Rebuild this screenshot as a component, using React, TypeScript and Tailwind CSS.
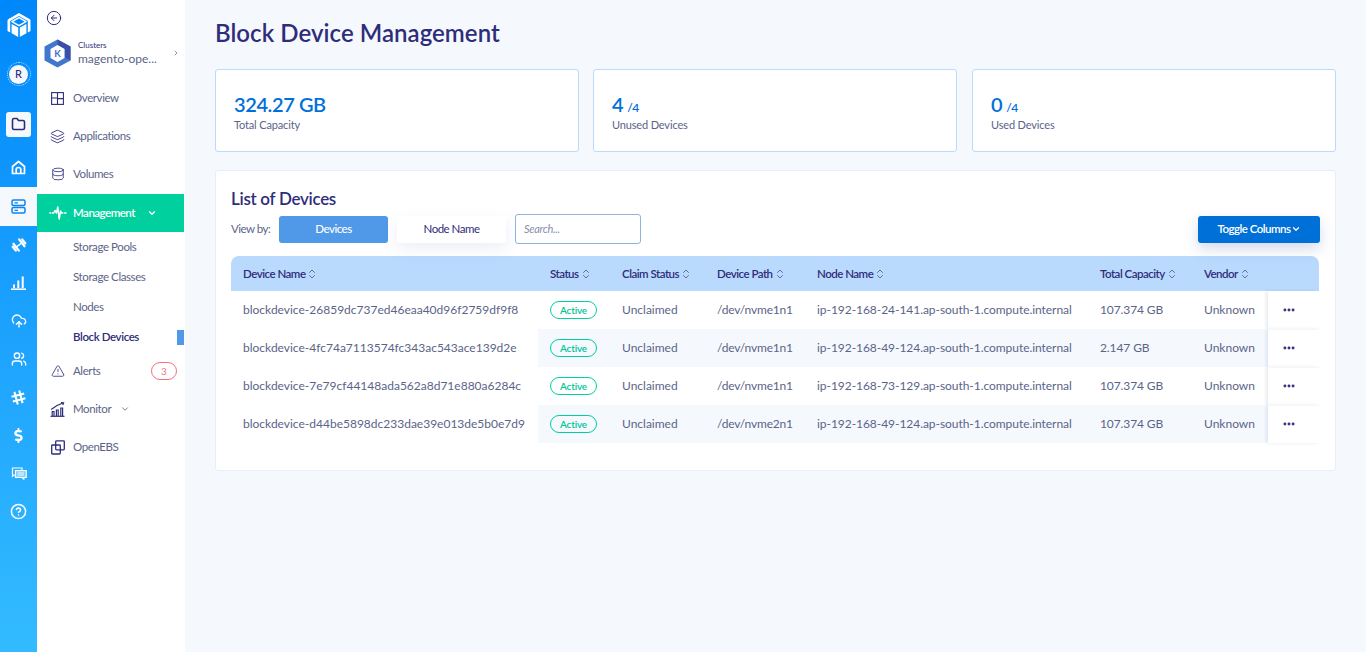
import React from "react";
import { ArrowLeftCircle, ChevronDown, ChevronRight, ChevronsUpDown, TriangleAlert, Layers, Database, CloudUpload, Users, CircleHelp, MoreHorizontal } from "lucide-react";
import { FaDollarSign } from "react-icons/fa";

const rows = [
  ["blockdevice-26859dc737ed46eaa40d96f2759df9f8", "/dev/nvme1n1", "ip-192-168-24-141.ap-south-1.compute.internal", "107.374 GB"],
  ["blockdevice-4fc74a7113574fc343ac543ace139d2e", "/dev/nvme1n1", "ip-192-168-49-124.ap-south-1.compute.internal", "2.147 GB"],
  ["blockdevice-7e79cf44148ada562a8d71e880a6284c", "/dev/nvme1n1", "ip-192-168-73-129.ap-south-1.compute.internal", "107.374 GB"],
  ["blockdevice-d44be5898dc233dae39e013de5b0e7d9", "/dev/nvme2n1", "ip-192-168-49-124.ap-south-1.compute.internal", "107.374 GB"],
];
const heads = ["Device Name", "Status", "Claim Status", "Device Path", "Node Name", "Total Capacity", "Vendor"];

const FolderI = () => (
  <svg width="15" height="14" viewBox="0 0 15 14" fill="none" stroke="#2f2d7a" strokeWidth="1.6" strokeLinejoin="round">
    <path d="M1.5 3 Q1.5 1.5 3 1.5 H6 L7.5 3.5 H12 Q13.5 3.5 13.5 5 V11 Q13.5 12.5 12 12.5 H3 Q1.5 12.5 1.5 11 Z" />
  </svg>
);
const HomeI = () => (
  <svg width="15" height="15" viewBox="0 0 15 15" fill="none" stroke="white" strokeWidth="1.7" strokeLinejoin="round">
    <path d="M1.5 6.5 L7.5 1.5 L13.5 6.5 V13.5 H1.5 Z" />
    <path d="M5.2 13.5 V9.5 Q5.2 7.5 7.5 7.5 Q9.8 7.5 9.8 9.5 V13.5" />
  </svg>
);
const ServerI = () => (
  <svg width="15" height="15" viewBox="0 0 15 15" fill="none" stroke="#0a84f0" strokeWidth="1.5">
    <rect x="1" y="1" width="13" height="5.5" rx="1.5" />
    <rect x="1" y="8.5" width="13" height="5.5" rx="1.5" />
    <path d="M3.5 3.8 H7 M3.5 11.3 H7" strokeWidth="1.2" />
  </svg>
);
const DumbbellI = () => (
  <svg width="16" height="16" viewBox="0 0 16 16" fill="none" stroke="white" strokeLinecap="round">
    <g transform="rotate(-38 8 8)">
      <path d="M6 8 H10" strokeWidth="1.6" />
      <path d="M2 5.5 V10.5 M4.4 3.6 V12.4 M11.6 3.6 V12.4 M14 5.5 V10.5" strokeWidth="2.2" />
    </g>
  </svg>
);
const BarsI = () => (
  <svg width="15" height="14" viewBox="0 0 15 14" fill="white">
    <rect x="0" y="12.4" width="15" height="1.6" />
    <rect x="2" y="8.5" width="2" height="3.5" />
    <rect x="6.3" y="4.5" width="2" height="7.5" />
    <rect x="10.7" y="0.5" width="2" height="11.5" />
  </svg>
);
const HashI = () => (
  <svg width="15" height="15" viewBox="0 0 15 15" fill="none" stroke="white" strokeWidth="2.1">
    <g transform="rotate(-15 7.5 7.5)">
      <path d="M5 1 L5 14 M10 1 L10 14 M1 5 L14 5 M1 10 L14 10" />
    </g>
  </svg>
);
const ChatI = () => (
  <svg width="16" height="13" viewBox="0 0 16 13" fill="none" stroke="white" strokeWidth="1.2">
    <path d="M4.5 8 H3 L1.5 9.2 V1 H11 V3" />
    <path d="M4.5 3.6 H15.2 V10.4 H12.8 V12.2 L10.8 10.4 H4.5 Z" fill="white" fillOpacity="0.35" />
    <path d="M6.5 6 H13.2 M6.5 8 H13.2" strokeWidth="1" />
  </svg>
);
const OverviewI = () => (
  <svg width="13" height="13" viewBox="0 0 13 13" fill="none" stroke="#2f2d7a" strokeWidth="1.1">
    <rect x="0.6" y="0.6" width="11.8" height="11.8" />
    <path d="M6.5 0.6 V12.4 M0.6 6 H6.5 M6.5 6.6 H12.4" />
  </svg>
);
const WaveI = () => (
  <svg width="18" height="14" viewBox="0 0 18 14" fill="none" stroke="white" strokeWidth="1.5" strokeLinecap="round" strokeLinejoin="round">
    <path d="M0.8 7 H1.6 M3.4 7 H4.6 L6 4.5 L7.5 7 L8.8 1 L10.2 13 L11.6 5 L12.6 7 H13.8 M15.6 7 H17" />
  </svg>
);
const MonitorI = () => (
  <svg width="15" height="15" viewBox="0 0 15 15" fill="none" stroke="#2f2d7a" strokeWidth="1.2">
    <path d="M0.5 14.3 H14.5" />
    <path d="M2.2 14 V9.5 H4 V14 M6.4 14 V8 H8.2 V14 M10.8 14 V6 H12.6 V14" />
    <path d="M1.2 7.5 L7 3.5 L12.5 1.2" />
    <path d="M11 0.6 L13.6 0.8 L12.8 3" />
  </svg>
);
const CopyI = () => (
  <svg width="14" height="15" viewBox="0 0 14 15" fill="none" stroke="#2f2d7a" strokeWidth="1.3">
    <rect x="0.7" y="5" width="8.6" height="9" rx="0.8" />
    <rect x="4.7" y="0.8" width="8.6" height="9" rx="0.8" />
  </svg>
);

function NavItem({ icon, label, chevron }: { icon: React.ReactNode; label: string; chevron?: boolean }) {
  return (
    <div className="h-[38px] flex items-center pl-[13px] text-[11.5px] tracking-[-0.4px] text-[#5b6488]">
      <span className="w-[15px] mr-[8px] flex justify-center">{icon}</span>
      <span>{label}</span>
      {chevron && <ChevronDown size={10} className="ml-[9px] text-[#5b6488]" />}
    </div>
  );
}

function Stat({ value, sub, label, className }: { value: string; sub?: string; label: string; className?: string }) {
  return (
    <div className={"w-[364px] h-[83px] bg-white border border-[#bcdafc] rounded-[3px] pl-[18px] pt-[21px] " + (className ?? "")}>
      <div className="h-[26px] leading-[26px] text-[20px] font-semibold text-[#0070d9] tracking-[-0.4px]">
        {value}
        {sub && <span className="text-[12px] leading-[12px] font-semibold ml-[4px]">{sub}</span>}
      </div>
      <div className="text-[11px] leading-[16px] text-[#5b6488] tracking-[-0.15px]">{label}</div>
    </div>
  );
}

export default function App() {
  return (
    <div className="h-[652px] flex overflow-hidden bg-[#f5f9fe] font-['Lato','Noto_Sans',sans-serif]">
      <aside className="w-[37px] shrink-0 bg-gradient-to-b from-[#0088fb] to-[#33bbff] flex flex-col items-center">
        <div className="h-[49px] flex items-center justify-center">
          <svg width="24" height="26" viewBox="0 0 24 26">
            <path d="M12 1 L22.5 7 Q23.5 7.6 23.5 8.8 V19 L20.8 20.6 V9 L12 3.9 L3.2 9 V20.6 L0.5 19 V8.8 Q0.5 7.6 1.5 7 Z" fill="white" />
            <path d="M12 5.6 L19 9.7 L12 13.6 L5 9.7 Z" fill="none" stroke="white" strokeWidth="1.5" strokeLinejoin="round" />
            <path d="M4.6 12 L11.2 15.6 V25 L4.6 21.2 Z" fill="white" />
            <path d="M19.4 12 L12.8 15.6 V25 L19.4 21.2 Z" fill="white" />
          </svg>
        </div>
        <div className="h-[50px] flex items-center justify-center">
          <div className="w-[24px] h-[24px] rounded-full border border-dotted border-white/70 flex items-center justify-center">
            <div className="w-[19px] h-[19px] rounded-full bg-[#f5f9fe] flex items-center justify-center text-[11px] font-medium text-[#2f2d7a]">R</div>
          </div>
        </div>
        <div className="mt-[6px] h-[38px] flex items-center justify-center">
          <div className="w-[25px] h-[25px] rounded-[3px] bg-[#f5f9fe] flex items-center justify-center"><FolderI /></div>
        </div>
        <div className="mt-[5px] h-[39px] flex items-center justify-center"><HomeI /></div>
        <div className="h-[39px] w-full bg-[#f5f9fe] flex items-center justify-center"><ServerI /></div>
        <div className="w-full flex flex-col [&>div]:h-[38px] [&>div]:flex [&>div]:items-center [&>div]:justify-center text-white">
          <div><DumbbellI /></div>
          <div><BarsI /></div>
          <div><CloudUpload size={16} strokeWidth={2} /></div>
          <div><Users size={16} strokeWidth={2} /></div>
          <div><HashI /></div>
          <div><FaDollarSign size={15} /></div>
          <div><ChatI /></div>
          <div><CircleHelp size={17} strokeWidth={2.2} /></div>
        </div>
      </aside>

      <nav className="w-[148px] shrink-0 bg-white">
        <div className="h-[36px] pl-[9px] flex items-center">
          <ArrowLeftCircle size={16} strokeWidth={1.5} className="text-[#2f2d7a]" />
        </div>
        <div className="h-[43px] pb-[9px] flex items-center pl-[7px]">
          <svg width="27" height="29" viewBox="0 0 27 29" className="shrink-0">
            <path d="M13.5 0.5 L26.5 7.5 V21.5 L13.5 28.5 L0.5 21.5 V7.5 Z" fill="#3f78cc" />
            <path d="M13.5 0.5 L26.5 7.5 V21.5 L21 18.5 V10 L13.5 6 Z" fill="#3a4fa5" />
            <path d="M13.5 6 L20.5 10 V19 L13.5 23 L6.5 19 V10 Z" fill="white" />
            <text x="13.5" y="18" textAnchor="middle" fontSize="9.5" fontWeight="700" fill="#3f6fc0">K</text>
          </svg>
          <div className="ml-[7px]">
            <div className="text-[8px] leading-[11px] text-[#2f2d7a]">Clusters</div>
            <div className="text-[12px] leading-[16px] text-[#5b6488]">magento-ope...</div>
          </div>
          <ChevronRight size={8} className="ml-[15px] text-[#5b6488]" />
        </div>
        <NavItem icon={<OverviewI />} label="Overview" />
        <NavItem icon={<Layers size={15} strokeWidth={1.4} className="text-[#2f2d7a]" />} label="Applications" />
        <NavItem icon={<Database size={14} strokeWidth={1.4} className="text-[#2f2d7a]" />} label="Volumes" />
        <div className="h-[38px] mt-[1px] mr-[1px] flex items-center pl-[12px] bg-[#00cf9e] text-white text-[11.5px] tracking-[-0.5px] font-semibold">
          <span className="mr-[6px]"><WaveI /></span>
          <span>Management</span>
          <ChevronDown size={10} strokeWidth={3} className="ml-[12px]" />
        </div>
        <div className="pl-[36px] pr-[1px] text-[11.5px] tracking-[-0.4px] text-[#5b6488]">
          <div className="h-[30px] flex items-center">Storage Pools</div>
          <div className="h-[30px] flex items-center">Storage Classes</div>
          <div className="h-[30px] flex items-center">Nodes</div>
          <div className="h-[30px] flex items-center justify-between font-semibold text-[#2f2d7a]">
            <span>Block Devices</span>
            <span className="w-[7px] h-[15px] bg-[#5098e8]" />
          </div>
        </div>
        <div className="h-[38px] flex items-center pl-[13px] pr-[8px] text-[11.5px] tracking-[-0.4px] text-[#5b6488]">
          <span className="w-[15px] mr-[8px] flex justify-center"><TriangleAlert size={14} strokeWidth={1.4} className="text-[#2f2d7a]" /></span>
          <span>Alerts</span>
          <span className="ml-auto w-[26px] h-[18px] rounded-full border border-[#f7727f] text-[#f7727f] text-[10px] tracking-normal flex items-center justify-center">3</span>
        </div>
        <NavItem icon={<MonitorI />} label="Monitor" chevron />
        <NavItem icon={<CopyI />} label="OpenEBS" />
      </nav>

      <main className="flex-1 pl-[30px] pr-[30px]">
        <h1 className="mt-[17px] text-[24px] leading-[32px] font-semibold text-[#2f2d7a] tracking-[0.05px]">Block Device Management</h1>
        <div className="mt-[20px] flex">
          <Stat value="324.27 GB" label="Total Capacity" />
          <Stat value="4" sub="/4" label="Unused Devices" className="ml-[14px]" />
          <Stat value="0" sub="/4" label="Used Devices" className="ml-[15px]" />
        </div>
        <section className="mt-[18px] h-[301px] bg-white border border-[#e6eef8] rounded-[3px] pl-[15px] pr-[15px] pt-[18px]">
          <h2 className="text-[17px] leading-[20px] font-semibold text-[#2f2d7a] tracking-[-0.3px]">List of Devices</h2>
          <div className="mt-[5px] flex items-center">
            <span className="text-[11.5px] tracking-[-0.5px] text-[#5b6488] w-[48px]">View by:</span>
            <button className="w-[109px] h-[27px] rounded-[3px] bg-[#5098e8] text-white text-[11.5px] tracking-[-0.5px] font-medium">Devices</button>
            <button className="ml-[9px] w-[109px] h-[27px] rounded-[3px] bg-white shadow-[0_6px_16px_rgba(80,100,180,0.10)] text-[#2f2d7a] text-[11.5px] tracking-[-0.5px]">Node Name</button>
            <div className="ml-[9px] w-[126px] h-[30px] rounded-[3px] border border-[#8fb4e2] flex items-center pl-[8px] text-[11px] tracking-[-0.3px] italic text-[#8a90ad]">Search...</div>
            <button className="ml-auto w-[122px] h-[27px] rounded-[3px] bg-[#0070d9] text-white text-[11.5px] tracking-[-0.5px] font-semibold flex items-center justify-center shadow-[0_6px_14px_rgba(60,90,170,0.22)]">
              Toggle Columns<ChevronDown size={10} strokeWidth={3} />
            </button>
          </div>
          <table className="mt-[12px] w-[1088px] table-fixed border-collapse text-[12px] text-[#5b6488]">
            <colgroup>
              <col className="w-[307px]" />
              <col className="w-[72px]" />
              <col className="w-[95px]" />
              <col className="w-[100px]" />
              <col className="w-[283px]" />
              <col className="w-[104px]" />
              <col className="w-[76px]" />
              <col className="w-[51px]" />
            </colgroup>
            <thead>
              <tr className="h-[35px] bg-[#b9d9fd] text-[#2f2d7a]">
                {heads.map((h, i) => (
                  <th key={h} className={"pl-[12px] text-left text-[11.5px] tracking-[-0.5px] font-semibold whitespace-nowrap " + (i === 0 ? "rounded-tl-[8px]" : "")}>
                    <span className="inline-flex items-center">{h}<ChevronsUpDown size={12} strokeWidth={1.25} className="ml-[1px]" /></span>
                  </th>
                ))}
                <th className="rounded-tr-[8px]" />
              </tr>
            </thead>
            <tbody>
              {rows.map((r, i) => {
                const s = i % 2 === 1 ? "bg-[#f5f9fe]" : "";
                return (
                  <tr key={r[0]} className="h-[38px]">
                    <td className="pl-[12px] whitespace-nowrap bg-white">{r[0]}</td>
                    <td className={"pl-[12px] " + s}>
                      <span className="inline-flex w-[47px] h-[18px] rounded-full border border-[#00cf9e] text-[#00c596] text-[10px] font-semibold tracking-[-0.2px] items-center justify-center">Active</span>
                    </td>
                    <td className={"pl-[12px] " + s}>Unclaimed</td>
                    <td className={"pl-[12px] tracking-[-0.2px] " + s}>{r[1]}</td>
                    <td className={"pl-[12px] whitespace-nowrap tracking-[-0.05px] " + s}>{r[2]}</td>
                    <td className={"pl-[12px] tracking-[-0.1px] " + s}>{r[3]}</td>
                    <td className={"pl-[12px] " + s}>Unknown</td>
                    <td className="bg-white shadow-[-2px_0_3px_rgba(90,110,160,0.14)] border-b border-[#f5f7fb]">
                      <div className="flex justify-center pr-[10px]"><MoreHorizontal size={14} strokeWidth={3} className="text-[#2f2d7a]" /></div>
                    </td>
                  </tr>
                );
              })}
            </tbody>
          </table>
        </section>
      </main>
    </div>
  );
}
